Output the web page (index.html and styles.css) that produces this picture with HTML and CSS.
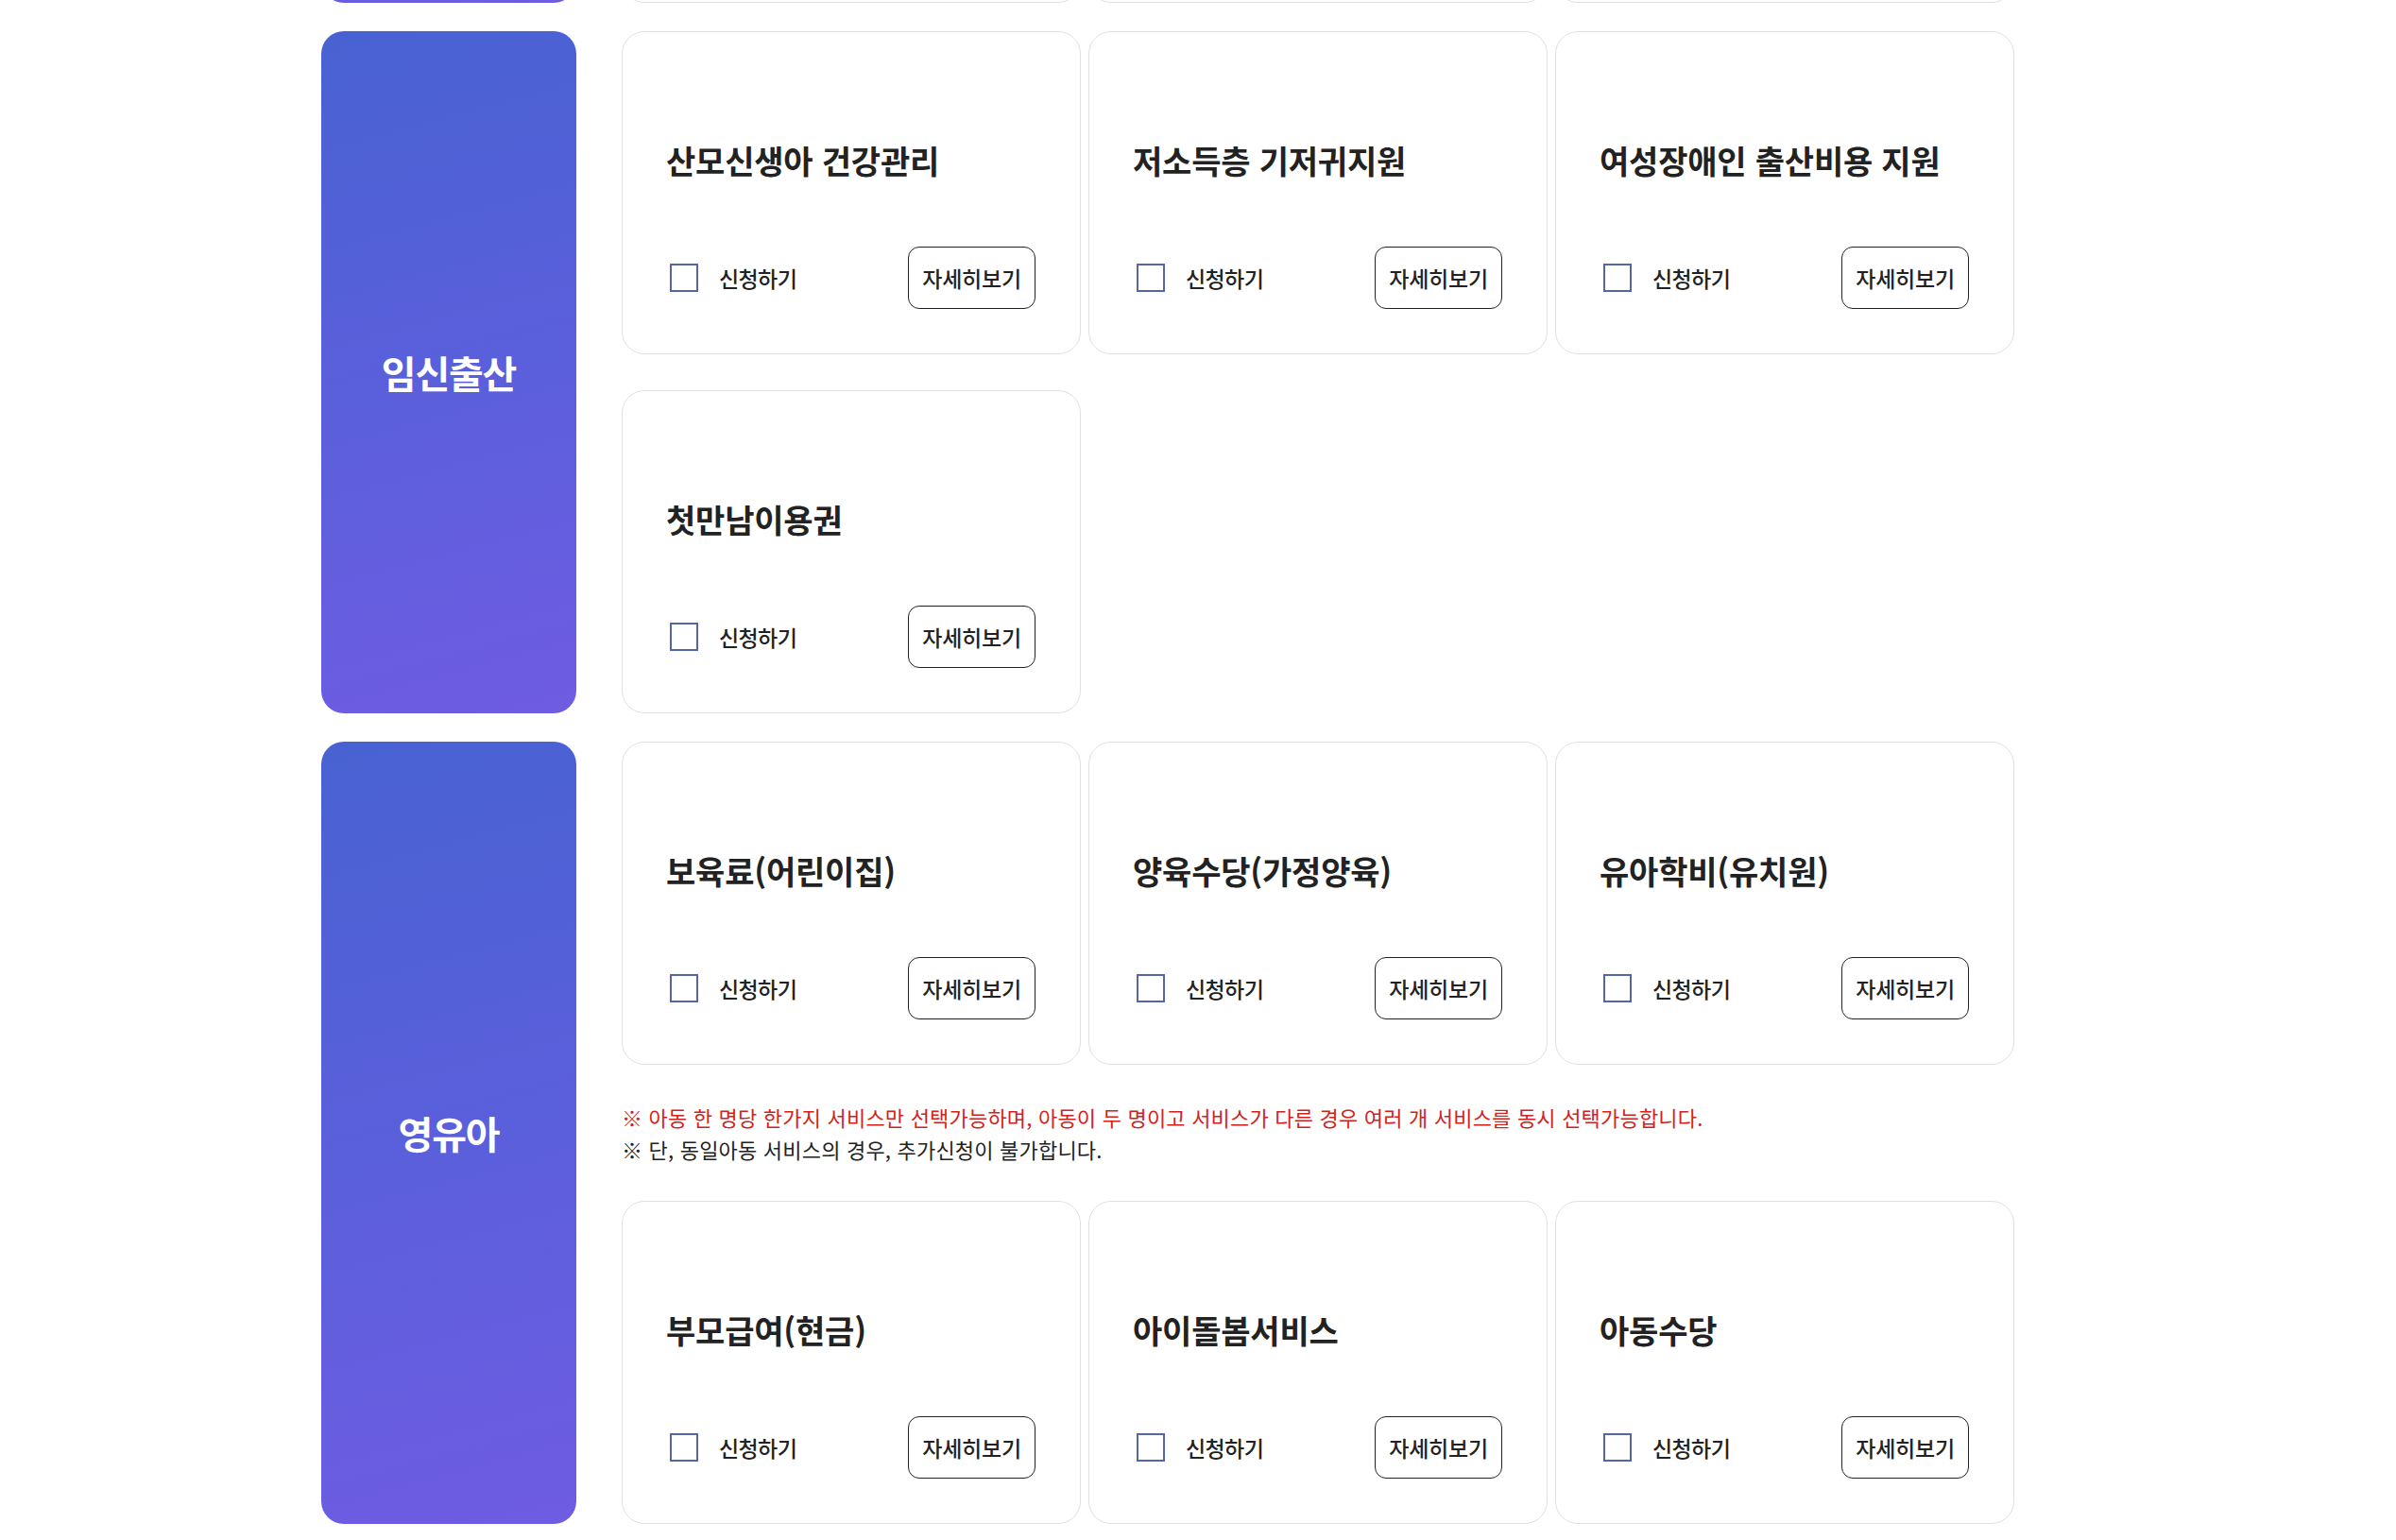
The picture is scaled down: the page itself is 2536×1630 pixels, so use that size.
FILE: index.html
```html
<!DOCTYPE html>
<html lang="ko">
<head>
    <meta charset="UTF-8">
    <meta name="viewport" content="width=device-width, initial-scale=1.0">
    <title>출산·양육 서비스 신청</title>
    <link rel="stylesheet" href="styles.css">
</head>
<body>

    <div class="service-list">
        <!-- 이전 분류 (위로 스크롤되어 아래 끝만 보임) -->
        <section class="category category-prev">
            <div class="category-name"></div>
            <div class="card-grid">
                <div class="card"></div>
                <div class="card"></div>
                <div class="card"></div>
            </div>
        </section>

        <!-- 임신출산 -->
        <section class="category">
            <div class="category-name">임신출산</div>
            <div class="card-grid">
                <div class="card">
                    <h3 class="card-title">산모신생아 건강관리</h3>
                    <div class="card-foot">
                        <label class="apply"><input type="checkbox" name="svc"> <span>신청하기</span></label>
                        <button type="button" class="btn-detail">자세히보기</button>
                    </div>
                </div>
                <div class="card">
                    <h3 class="card-title">저소득층 기저귀지원</h3>
                    <div class="card-foot">
                        <label class="apply"><input type="checkbox" name="svc"> <span>신청하기</span></label>
                        <button type="button" class="btn-detail">자세히보기</button>
                    </div>
                </div>
                <div class="card">
                    <h3 class="card-title">여성장애인 출산비용 지원</h3>
                    <div class="card-foot">
                        <label class="apply"><input type="checkbox" name="svc"> <span>신청하기</span></label>
                        <button type="button" class="btn-detail">자세히보기</button>
                    </div>
                </div>
                <div class="card">
                    <h3 class="card-title">첫만남이용권</h3>
                    <div class="card-foot">
                        <label class="apply"><input type="checkbox" name="svc"> <span>신청하기</span></label>
                        <button type="button" class="btn-detail">자세히보기</button>
                    </div>
                </div>
            </div>
        </section>

        <!-- 영유아 -->
        <section class="category">
            <div class="category-name">영유아</div>
            <div class="card-grid">
                <div class="card">
                    <h3 class="card-title">보육료(어린이집)</h3>
                    <div class="card-foot">
                        <label class="apply"><input type="checkbox" name="svc"> <span>신청하기</span></label>
                        <button type="button" class="btn-detail">자세히보기</button>
                    </div>
                </div>
                <div class="card">
                    <h3 class="card-title">양육수당(가정양육)</h3>
                    <div class="card-foot">
                        <label class="apply"><input type="checkbox" name="svc"> <span>신청하기</span></label>
                        <button type="button" class="btn-detail">자세히보기</button>
                    </div>
                </div>
                <div class="card">
                    <h3 class="card-title">유아학비(유치원)</h3>
                    <div class="card-foot">
                        <label class="apply"><input type="checkbox" name="svc"> <span>신청하기</span></label>
                        <button type="button" class="btn-detail">자세히보기</button>
                    </div>
                </div>

                <div class="notice">
                    <p class="notice-red">※ 아동 한 명당 한가지 서비스만 선택가능하며, 아동이 두 명이고 서비스가 다른 경우 여러 개 서비스를 동시 선택가능합니다.</p>
                    <p>※ 단, 동일아동 서비스의 경우, 추가신청이 불가합니다.</p>
                </div>

                <div class="card">
                    <h3 class="card-title">부모급여(현금)</h3>
                    <div class="card-foot">
                        <label class="apply"><input type="checkbox" name="svc"> <span>신청하기</span></label>
                        <button type="button" class="btn-detail">자세히보기</button>
                    </div>
                </div>
                <div class="card">
                    <h3 class="card-title">아이돌봄서비스</h3>
                    <div class="card-foot">
                        <label class="apply"><input type="checkbox" name="svc"> <span>신청하기</span></label>
                        <button type="button" class="btn-detail">자세히보기</button>
                    </div>
                </div>
                <div class="card">
                    <h3 class="card-title">아동수당</h3>
                    <div class="card-foot">
                        <label class="apply"><input type="checkbox" name="svc"> <span>신청하기</span></label>
                        <button type="button" class="btn-detail">자세히보기</button>
                    </div>
                </div>
            </div>
        </section>
    </div>

</body>
</html>
```

FILE: styles.css
```css
/* 서비스 선택 화면 */
body {
    font-family: "Noto Sans CJK KR", "Noto Sans", sans-serif;
    background: #fff;
    margin: 0;
    padding: 0;
    color: #222;
}

.service-list {
    display: flex;
    flex-direction: column;
    gap: 30px;
    max-width: 1856px;
    margin: -339px auto 0;
}

.category {
    display: flex;
    gap: 48px;
}

.category-name {
    flex: 0 0 270px;
    display: flex;
    align-items: center;
    justify-content: center;
    border-radius: 24px;
    background: linear-gradient(165deg, #4862d2 0%, #5c5fdc 55%, #6f5ce3 100%);
    color: #fff;
    font-size: 40px;
    font-weight: 700;
    letter-spacing: -1.2px;
}

.card-grid {
    display: grid;
    grid-template-columns: repeat(3, 486px);
    column-gap: 8px;
    row-gap: 38px;
    align-content: start;
}

.card {
    height: 342px;
    box-sizing: border-box;
    display: flex;
    flex-direction: column;
    justify-content: flex-end;
    padding: 0 47px 47px 46px;
    border: 1px solid #e0e0e0;
    border-radius: 24px;
    background: #fff;
}

.card-title {
    margin: 0 0 66px;
    font-size: 34px;
    line-height: 50px;
    font-weight: 700;
    letter-spacing: -0.2px;
    color: #222;
}

.card-foot {
    display: flex;
    align-items: center;
    justify-content: space-between;
}

.apply {
    display: flex;
    align-items: center;
    gap: 22px;
    font-size: 23px;
    font-weight: 500;
    letter-spacing: -0.6px;
    color: #222;
    cursor: pointer;
}

.apply input {
    appearance: none;
    width: 30px;
    height: 30px;
    margin: 0 0 0 4px;
    box-sizing: border-box;
    border: 2px solid #5566a8;
    background: #fff;
    cursor: pointer;
}

.apply input:checked {
    background: #5566a8;
    box-shadow: inset 0 0 0 4px #fff;
}

.btn-detail {
    height: 66px;
    padding: 0 14px;
    border: 1px solid #222;
    border-radius: 12px;
    background: #fff;
    font-family: inherit;
    font-size: 23px;
    font-weight: 500;
    letter-spacing: -0.2px;
    color: #222;
    cursor: pointer;
}

.notice {
    grid-column: 1 / -1;
    font-size: 22px;
    line-height: 34px;
    letter-spacing: 0.2px;
    color: #222;
}

.notice p {
    margin: 0;
}

.notice .notice-red {
    color: #d1231d;
}
```
